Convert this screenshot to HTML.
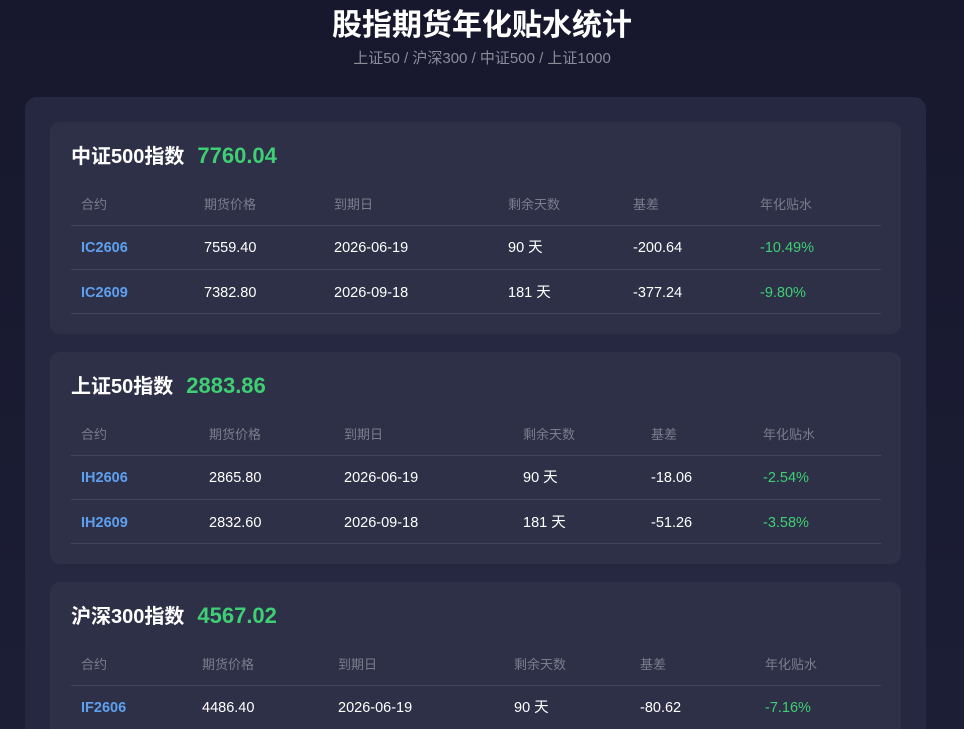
<!DOCTYPE html>
<html><head><meta charset="utf-8"><style>
*{margin:0;padding:0;box-sizing:border-box}
html,body{width:964px;height:729px;overflow:hidden}
body{background:linear-gradient(180deg,#17182d 0%,#1c1e36 100%);font-family:"Liberation Sans","Noto Sans CJK SC",sans-serif;color:#fff;position:relative}
h1{position:absolute;top:0px;left:0;width:964px;text-align:center;font-size:30px;font-weight:bold;color:#fff}
.sub{position:absolute;top:47px;left:0;width:964px;text-align:center;font-size:15px;color:#8a8c98}
.panel{position:absolute;left:25px;top:97px;width:901px;height:632px;overflow:hidden;border-radius:12px 12px 0 0;background:#252840}
.card{position:absolute;left:25px;width:851px;height:212px;border-radius:10px;background:#2d3047}
.card.last{height:147px;border-radius:10px 10px 0 0}
.t{position:absolute;left:21px;top:18px;font-size:20px;font-weight:bold;white-space:nowrap}
.t span{color:#3ecf74;font-size:22px;margin-left:13px}
.c{position:absolute;white-space:nowrap;font-size:14.5px;line-height:20px}
.h{font-size:13px;color:#7b7d8c}
.r{margin-top:1px}
.ln{position:absolute;left:21px;width:810px;height:1px;background:#41445b}
.b{color:#5ea0ef;font-weight:bold}
.g{color:#3ecf74}
</style></head><body>
<h1>股指期货年化贴水统计</h1>
<div class="sub">上证50 / 沪深300 / 中证500 / 上证1000</div>
<div class="panel">
<div class="card" style="top:25px">
<div class="t">中证500指数<span>7760.04</span></div>
<div class="c h" style="left:31px;top:73px">合约</div><div class="c h" style="left:154px;top:73px">期货价格</div><div class="c h" style="left:284px;top:73px">到期日</div><div class="c h" style="left:458px;top:73px">剩余天数</div><div class="c h" style="left:583px;top:73px">基差</div><div class="c h" style="left:710px;top:73px">年化贴水</div>
<div class="ln" style="top:103px"></div>
<div class="c b r" style="left:31px;top:115px">IC2606</div><div class="c r" style="left:154px;top:115px">7559.40</div><div class="c r" style="left:284px;top:115px">2026-06-19</div><div class="c r" style="left:458px;top:115px">90 天</div><div class="c r" style="left:583px;top:115px">-200.64</div><div class="c g r" style="left:710px;top:115px">-10.49%</div>
<div class="ln" style="top:147px"></div>
<div class="c b r" style="left:31px;top:160px">IC2609</div><div class="c r" style="left:154px;top:160px">7382.80</div><div class="c r" style="left:284px;top:160px">2026-09-18</div><div class="c r" style="left:458px;top:160px">181 天</div><div class="c r" style="left:583px;top:160px">-377.24</div><div class="c g r" style="left:710px;top:160px">-9.80%</div>
<div class="ln" style="top:191px"></div>
</div>
<div class="card" style="top:255px">
<div class="t">上证50指数<span>2883.86</span></div>
<div class="c h" style="left:31px;top:73px">合约</div><div class="c h" style="left:159px;top:73px">期货价格</div><div class="c h" style="left:294px;top:73px">到期日</div><div class="c h" style="left:473px;top:73px">剩余天数</div><div class="c h" style="left:601px;top:73px">基差</div><div class="c h" style="left:713px;top:73px">年化贴水</div>
<div class="ln" style="top:103px"></div>
<div class="c b r" style="left:31px;top:115px">IH2606</div><div class="c r" style="left:159px;top:115px">2865.80</div><div class="c r" style="left:294px;top:115px">2026-06-19</div><div class="c r" style="left:473px;top:115px">90 天</div><div class="c r" style="left:601px;top:115px">-18.06</div><div class="c g r" style="left:713px;top:115px">-2.54%</div>
<div class="ln" style="top:147px"></div>
<div class="c b r" style="left:31px;top:160px">IH2609</div><div class="c r" style="left:159px;top:160px">2832.60</div><div class="c r" style="left:294px;top:160px">2026-09-18</div><div class="c r" style="left:473px;top:160px">181 天</div><div class="c r" style="left:601px;top:160px">-51.26</div><div class="c g r" style="left:713px;top:160px">-3.58%</div>
<div class="ln" style="top:191px"></div>
</div>
<div class="card last" style="top:485px">
<div class="t">沪深300指数<span>4567.02</span></div>
<div class="c h" style="left:31px;top:73px">合约</div><div class="c h" style="left:152px;top:73px">期货价格</div><div class="c h" style="left:288px;top:73px">到期日</div><div class="c h" style="left:464px;top:73px">剩余天数</div><div class="c h" style="left:590px;top:73px">基差</div><div class="c h" style="left:715px;top:73px">年化贴水</div>
<div class="ln" style="top:103px"></div>
<div class="c b r" style="left:31px;top:115px">IF2606</div><div class="c r" style="left:152px;top:115px">4486.40</div><div class="c r" style="left:288px;top:115px">2026-06-19</div><div class="c r" style="left:464px;top:115px">90 天</div><div class="c r" style="left:590px;top:115px">-80.62</div><div class="c g r" style="left:715px;top:115px">-7.16%</div>
</div>
</div>
</body></html>
